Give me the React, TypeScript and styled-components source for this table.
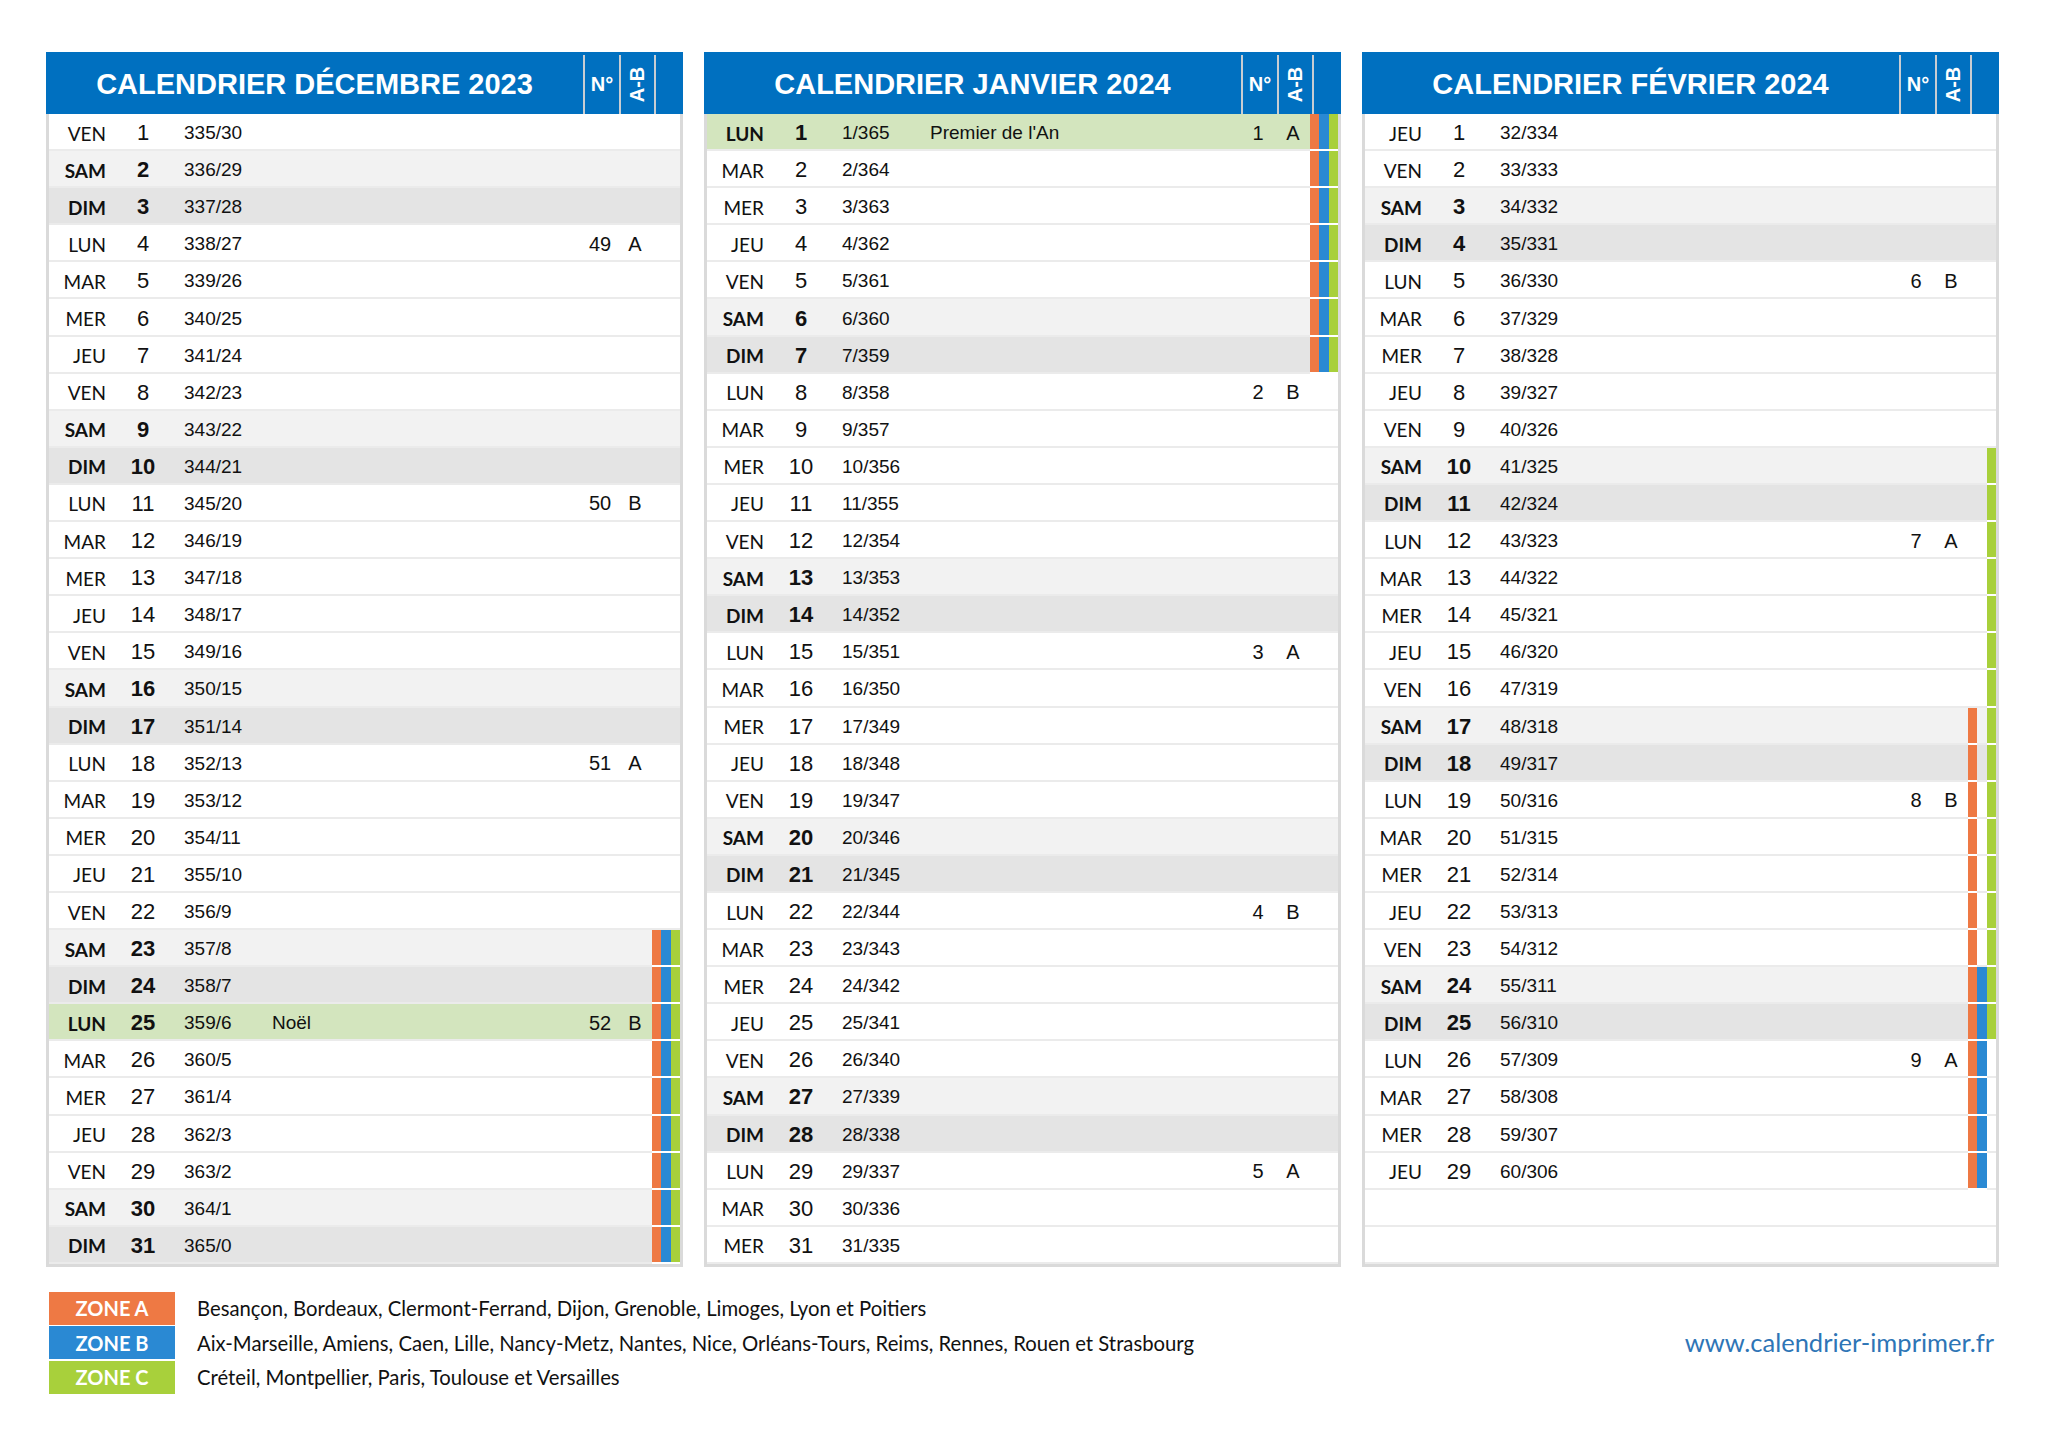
import React from 'react';
import styled, { createGlobalStyle } from 'styled-components';

const GlobalStyle = createGlobalStyle`
  html, body { margin: 0; padding: 0; background: #ffffff; }
  body { font-family: "Liberation Sans", Arial, sans-serif; color: #111; }
  * { box-sizing: border-box; }
`;

type Zone = 'A' | 'B' | 'C';
type Kind = 'week' | 'sat' | 'sun' | 'fete' | 'empty';

interface DayRow {
  name: string;
  num: string;
  doy: string;
  holiday?: string;
  week?: string;
  ab?: string;
  zones: Zone[];
  kind: Kind;
}

const DAY_NAMES = ['DIM', 'LUN', 'MAR', 'MER', 'JEU', 'VEN', 'SAM'];

const ZONE_COLORS: Record<Zone, string> = {
  A: '#ee7944',
  B: '#2a89d3',
  C: '#a8d03b',
};

function isoWeek(d: Date): number {
  const t = new Date(Date.UTC(d.getFullYear(), d.getMonth(), d.getDate()));
  const dayNum = t.getUTCDay() || 7;
  t.setUTCDate(t.getUTCDate() + 4 - dayNum);
  const yearStart = new Date(Date.UTC(t.getUTCFullYear(), 0, 1));
  return Math.ceil(((t.getTime() - yearStart.getTime()) / 86400000 + 1) / 7);
}

function inRange(d: Date, from: [number, number, number], to: [number, number, number]) {
  const a = new Date(from[0], from[1], from[2]).getTime();
  const b = new Date(to[0], to[1], to[2]).getTime();
  const x = d.getTime();
  return x >= a && x <= b;
}

function zonesFor(d: Date): Zone[] {
  const z: Zone[] = [];
  const noel = inRange(d, [2023, 11, 23], [2024, 0, 7]);
  if (noel || inRange(d, [2024, 1, 17], [2024, 2, 3])) z.push('A');
  if (noel || inRange(d, [2024, 1, 24], [2024, 2, 10])) z.push('B');
  if (noel || inRange(d, [2024, 1, 10], [2024, 1, 25])) z.push('C');
  return z;
}

const HOLIDAYS: Record<string, string> = {
  '2023-11-25': 'Noël',
  '2024-0-1': "Premier de l'An",
};

function buildMonth(year: number, month: number, startDoy: number, yearLen: number): DayRow[] {
  const rows: DayRow[] = [];
  const len = new Date(year, month + 1, 0).getDate();
  for (let i = 1; i <= 31; i++) {
    if (i > len) {
      rows.push({ name: '', num: '', doy: '', zones: [], kind: 'empty' });
      continue;
    }
    const d = new Date(year, month, i);
    const wd = d.getDay();
    const doy = startDoy + i - 1;
    const holiday = HOLIDAYS[`${year}-${month}-${i}`];
    const wk = isoWeek(d);
    let kind: Kind = 'week';
    if (holiday) kind = 'fete';
    else if (wd === 6) kind = 'sat';
    else if (wd === 0) kind = 'sun';
    rows.push({
      name: DAY_NAMES[wd],
      num: String(i),
      doy: `${doy}/${yearLen - doy}`,
      holiday,
      week: wd === 1 ? String(wk) : undefined,
      ab: wd === 1 ? (wk % 2 === 1 ? 'A' : 'B') : undefined,
      zones: zonesFor(d),
      kind,
    });
  }
  return rows;
}

const MONTHS = [
  { title: 'CALENDRIER DÉCEMBRE 2023', rows: buildMonth(2023, 11, 335, 365) },
  { title: 'CALENDRIER JANVIER 2024', rows: buildMonth(2024, 0, 1, 366) },
  { title: 'CALENDRIER FÉVRIER 2024', rows: buildMonth(2024, 1, 32, 366) },
];

/* ---------- layout ---------- */

const Page = styled.div`
  width: 2048px;
  min-height: 1448px;
  padding: 52px 46px 0 46px;
  background: #fff;
`;

const Panels = styled.div`
  display: flex;
  gap: 21px;
`;

const Panel = styled.section`
  width: 637px;
  display: flex;
  flex-direction: column;
`;

const Header = styled.div`
  height: 62px;
  background: #0070c0;
  display: grid;
  grid-template-columns: 537px 36px 35px 1fr;
  color: #fff;
`;

const Title = styled.div`
  display: flex;
  align-items: center;
  justify-content: center;
  font-family: "Liberation Sans", Arial, sans-serif;
  font-weight: 700;
  font-size: 29px;
  padding-top: 2px;
`;

const HeadCol = styled.div`
  margin-top: 3px;
  border-left: 2px solid #c9cdd2;
  display: flex;
  align-items: center;
  justify-content: center;
  font-family: "Liberation Sans", Arial, sans-serif;
  font-weight: 700;
  font-size: 20px;
`;

const Rotated = styled.span`
  display: inline-block;
  transform: rotate(-90deg);
  white-space: nowrap;
  font-size: 20px;
`;

const Body = styled.div`
  border: 3px solid #dadada;
  border-top: none;
`;

const ROW_BG: Record<Kind, string> = {
  week: '#ffffff',
  empty: '#ffffff',
  sat: '#f2f2f2',
  sun: '#e4e4e4',
  fete: '#d3e5be',
};

const Row = styled.div<{ $kind: Kind }>`
  display: grid;
  grid-template-columns: 57px 74px 92px 1fr 36px 34px 28px;
  height: 37.1px;
  background: ${(p) => ROW_BG[p.$kind]};
`;

const Cell = styled.div<{ $align?: 'left' | 'right' | 'center'; $bold?: boolean }>`
  display: flex;
  align-items: center;
  justify-content: ${(p) => (p.$align === 'right' ? 'flex-end' : p.$align === 'center' ? 'center' : 'flex-start')};
  border-bottom: 2px solid #ebebeb;
  font-weight: ${(p) => (p.$bold ? 700 : 400)};
  white-space: nowrap;
  padding-top: 3px;
`;

const DayName = styled(Cell)`
  font-family: Lato, "Open Sans", sans-serif;
  font-size: 19px;
  color: #111;
`;

const DayNum = styled(Cell)`
  font-size: 22px;
  color: #111;
`;

const Doy = styled(Cell)`
  font-size: 19px;
  padding-left: 4px;
  color: #111;
`;

const Holiday = styled(Cell)`
  font-size: 19px;
  color: #111;
`;

const Week = styled(Cell)`
  font-size: 20px;
  color: #111;
`;

const Bars = styled.div`
  display: grid;
  grid-template-columns: 1fr 1fr 1fr;
`;

const Slot = styled.div<{ $color?: string }>`
  background: ${(p) => p.$color || 'transparent'};
  border-bottom: 2px solid ${(p) => (p.$color ? '#ffffff' : '#ebebeb')};
`;

const Legend = styled.div`
  margin-top: 25px;
  display: flex;
  align-items: center;
  justify-content: space-between;
  padding-left: 3px;
  padding-right: 8px;
`;

const LegendList = styled.div`
  display: flex;
  flex-direction: column;
  gap: 1.5px;
`;

const LegendRow = styled.div`
  display: flex;
  align-items: center;
  gap: 22px;
`;

const ZoneBox = styled.div<{ $color: string }>`
  width: 126px;
  height: 33px;
  background: ${(p) => p.$color};
  color: #fff;
  display: flex;
  align-items: center;
  justify-content: center;
  font-family: Lato, "Open Sans", sans-serif;
  font-weight: 700;
  font-size: 20px;
`;

const LegendText = styled.div`
  font-family: Lato, "Open Sans", sans-serif;
  font-size: 20.3px;
  color: #111;
`;

const Url = styled.div`
  font-family: Lato, "Open Sans", sans-serif;
  font-size: 25.5px;
  color: #2e75b6;
  margin-bottom: 2px;
`;

const ZONES: { z: Zone; label: string; text: string }[] = [
  { z: 'A', label: 'ZONE A', text: 'Besançon, Bordeaux, Clermont-Ferrand, Dijon, Grenoble, Limoges, Lyon et Poitiers' },
  {
    z: 'B',
    label: 'ZONE B',
    text: 'Aix-Marseille, Amiens, Caen, Lille, Nancy-Metz, Nantes, Nice, Orléans-Tours, Reims, Rennes, Rouen et Strasbourg',
  },
  { z: 'C', label: 'ZONE C', text: 'Créteil, Montpellier, Paris, Toulouse et Versailles' },
];

function MonthPanel({ title, rows }: { title: string; rows: DayRow[] }) {
  return (
    <Panel>
      <Header>
        <Title>{title}</Title>
        <HeadCol>N°</HeadCol>
        <HeadCol>
          <Rotated>A-B</Rotated>
        </HeadCol>
        <HeadCol />
      </Header>
      <Body>
        {rows.map((r, i) => {
          const bold = r.kind === 'sat' || r.kind === 'sun' || r.kind === 'fete';
          return (
            <Row key={i} $kind={r.kind}>
              <DayName $align="right" $bold={bold}>{r.name}</DayName>
              <DayNum $align="center" $bold={bold}>{r.num}</DayNum>
              <Doy>{r.doy}</Doy>
              <Holiday>{r.holiday || ''}</Holiday>
              <Week $align="center">{r.week || ''}</Week>
              <Week $align="center">{r.ab || ''}</Week>
              <Bars>
                {(['A', 'B', 'C'] as Zone[]).map((z) => (
                  <Slot key={z} $color={r.zones.includes(z) ? ZONE_COLORS[z] : undefined} />
                ))}
              </Bars>
            </Row>
          );
        })}
      </Body>
    </Panel>
  );
}

export default function App() {
  return (
    <Page>
      <GlobalStyle />
      <Panels>
        {MONTHS.map((m) => (
          <MonthPanel key={m.title} title={m.title} rows={m.rows} />
        ))}
      </Panels>
      <Legend>
        <LegendList>
          {ZONES.map((z) => (
            <LegendRow key={z.z}>
              <ZoneBox $color={ZONE_COLORS[z.z]}>{z.label}</ZoneBox>
              <LegendText>{z.text}</LegendText>
            </LegendRow>
          ))}
        </LegendList>
        <Url>www.calendrier-imprimer.fr</Url>
      </Legend>
    </Page>
  );
}
